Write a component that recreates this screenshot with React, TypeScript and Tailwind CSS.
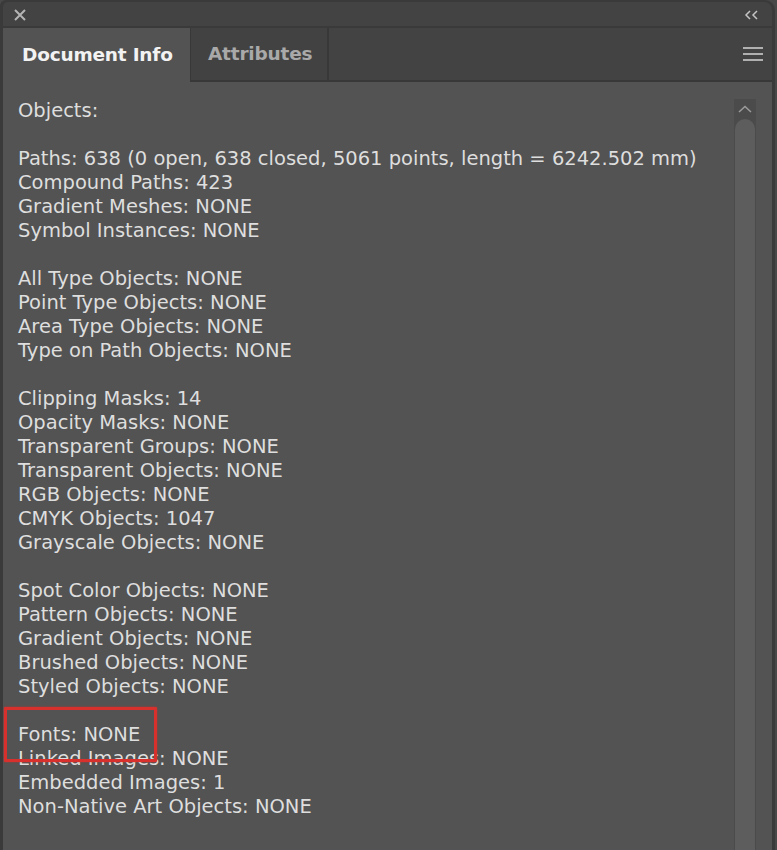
import React from "react";

const lines: string[] = [
  "Objects:",
  "",
  "Paths: 638 (0 open, 638 closed, 5061 points, length = 6242.502 mm)",
  "Compound Paths: 423",
  "Gradient Meshes: NONE",
  "Symbol Instances: NONE",
  "",
  "All Type Objects: NONE",
  "Point Type Objects: NONE",
  "Area Type Objects: NONE",
  "Type on Path Objects: NONE",
  "",
  "Clipping Masks: 14",
  "Opacity Masks: NONE",
  "Transparent Groups: NONE",
  "Transparent Objects: NONE",
  "RGB Objects: NONE",
  "CMYK Objects: 1047",
  "Grayscale Objects: NONE",
  "",
  "Spot Color Objects: NONE",
  "Pattern Objects: NONE",
  "Gradient Objects: NONE",
  "Brushed Objects: NONE",
  "Styled Objects: NONE",
  "",
  "Fonts: NONE",
  "Linked Images: NONE",
  "Embedded Images: 1",
  "Non-Native Art Objects: NONE",
];

const App = () => {
  return (
    <div
      className="w-[777px] h-[850px] overflow-hidden bg-[#484848] flex"
      style={{ fontFamily: '"DejaVu Sans", "Liberation Sans", sans-serif' }}
    >
      {/* パネル本体 */}
      <div className="w-[775px] h-full flex flex-col bg-[#3a3a3a] pl-[3px] pr-[3px] pt-[2px] rounded-tl-[6px] rounded-tr-[10px]">
        {/* タイトルバー */}
        <div className="h-[24px] shrink-0 flex items-center justify-between bg-[#434343] rounded-tl-[5px] rounded-tr-[8px] pl-[10px] pr-[12px]">
          <svg width="14" height="14" viewBox="0 0 14 14" className="mt-[2px]">
            <path d="M2 2 L12 12 M12 2 L2 12" stroke="#b4b4b4" strokeWidth="2" />
          </svg>
          <svg width="16" height="10" viewBox="0 0 16 10" className="mt-[1px]">
            <path d="M6 1 L2 5 L6 9 M13 1 L9 5 L13 9" stroke="#c4c4c4" strokeWidth="1.5" fill="none" />
          </svg>
        </div>
        {/* タブ */}
        <div className="h-[54px] shrink-0 flex mt-[2px] bg-[#434343]">
          <div className="w-[187px] bg-[#535353] flex items-center pl-[19px] text-[18.5px] font-bold text-[#f2f2f2] tracking-[-0.2px]">
            Document Info
          </div>
          <div className="w-[139px] bg-[#424242] border-l border-r-2 border-b-2 border-[#383838] flex items-center pl-[17px] text-[18.5px] font-bold text-[#a9a9a9] tracking-[-0.2px]">
            Attributes
          </div>
          <div className="flex-1 border-b-2 border-[#383838] flex items-center justify-end pr-[9px]">
            <div className="flex flex-col gap-[4px]">
              <div className="w-[20px] h-[2px] bg-[#b0b0b0]" />
              <div className="w-[20px] h-[2px] bg-[#b0b0b0]" />
              <div className="w-[20px] h-[2px] bg-[#b0b0b0]" />
            </div>
          </div>
        </div>
        {/* 内容 */}
        <div className="flex-1 bg-[#535353] flex">
          <div className="flex-1 pt-[17px] pl-[15px] text-[19.5px] leading-[24px] text-[#dedede]">
            {lines.map((line, i) =>
              line === "Fonts: NONE" ? (
                <div key={i} className="h-[24px] whitespace-nowrap">
                  <span className="relative inline-block">
                    {line}
                    <span className="absolute -left-[14px] -top-[16px] w-[153px] h-[55px] border-[3px] border-[#d8302c] rounded-[1px] shadow-[0_0_2px_rgba(216,48,44,0.8)]" />
                  </span>
                </div>
              ) : (
                <div key={i} className="h-[24px] whitespace-nowrap">
                  {line}
                </div>
              )
            )}
          </div>
          {/* スクロールバー */}
          <div className="w-[22px] mr-[16px] mt-[17px] bg-[#4b4b4b] flex flex-col items-center">
            <svg width="14" height="8" viewBox="0 0 14 8" className="mt-[6px]">
              <path d="M1 7 L7 1.5 L13 7" stroke="#9c9c9c" strokeWidth="1.5" fill="none" />
            </svg>
            <div className="w-[20px] flex-1 mt-[6px] bg-[#5d5d5d] rounded-t-[10px]" />
          </div>
        </div>
      </div>
    </div>
  );
};

export default App;
